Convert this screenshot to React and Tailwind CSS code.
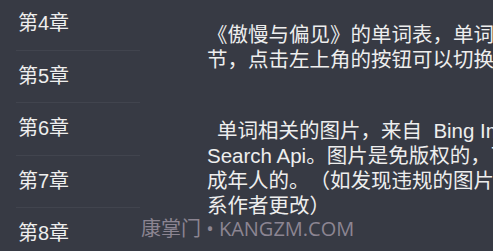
import React from "react";

const chapters = ["第4章", "第5章", "第6章", "第7章", "第8章"];

export default function App() {
  return (
    <div
      className="relative w-[493px] h-[251px] overflow-hidden bg-[#373a44] text-[#eeeeee] [text-spacing-trim:space-all]"
      style={{ fontFamily: '"Liberation Sans", "Noto Sans CJK SC", sans-serif' }}
    >
      <div className="flex">
        <div className="ml-4 w-[124px] shrink-0 -mt-[2px]">
          {chapters.map((c) => (
            <div
              key={c}
              className="h-[52.5px] flex items-center pl-[2px] border-b border-[#41444e] text-[20px] leading-none"
            >
              <span className="-mt-[1px]">{c}</span>
            </div>
          ))}
        </div>
        <div className="ml-[67px] shrink-0 w-[400px] pt-[22px] text-[20.5px] leading-[25px] whitespace-nowrap">
          <p>《傲慢与偏见》的单词表，单词</p>
          <p>节，点击左上角的按钮可以切换</p>
          <div className="mt-[46px]">
            <p className="pl-[10px]">单词相关的图片，来自&nbsp; Bing Image</p>
            <p>Search Api。图片是免版权的，可</p>
            <p>成年人的。（如发现违规的图片</p>
            <p>系作者更改）</p>
          </div>
        </div>
      </div>
      <div
        className="absolute left-[141px] top-[216px] text-[20px] leading-[25px] text-[#8c8592] whitespace-nowrap"
        style={{ fontFamily: '"Open Sans", "Noto Sans CJK SC", sans-serif' }}
      >
        康掌门 • KANGZM.COM
      </div>
    </div>
  );
}
